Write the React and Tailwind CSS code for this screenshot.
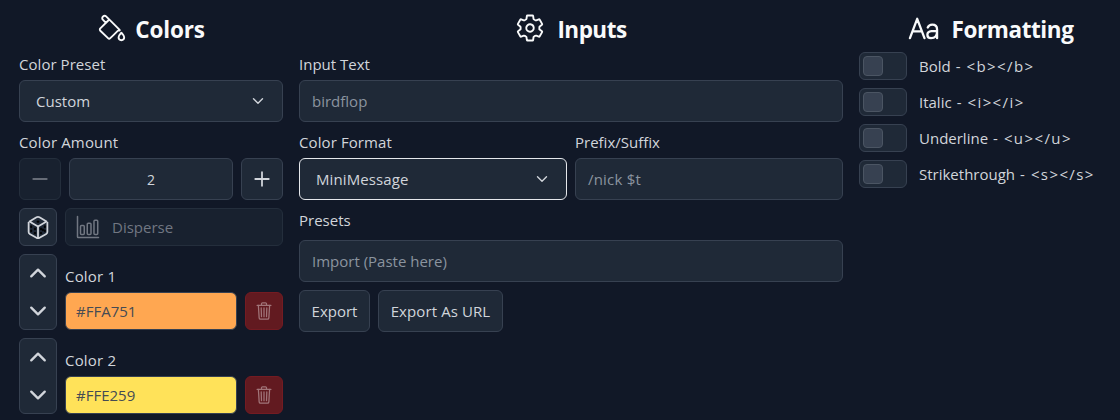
import {
  IoBarChartOutline,
  IoColorFillOutline,
  IoSettingsOutline,
  IoTrashOutline,
} from 'react-icons/io5';

const box = 'rounded-md border border-[#374151] bg-[#1f2937]';

function Stroke({ d, size = 24, width = 40, className = '' }) {
  return (
    <svg className={className} width={size} height={size} viewBox="0 0 512 512" fill="none" stroke="currentColor" strokeWidth={width} strokeLinecap="round" strokeLinejoin="round">
      <path d={d} />
    </svg>
  );
}

function Dice() {
  return (
    <svg width="24" height="24" viewBox="0 0 512 512">
      <g fill="#000" stroke="#000" strokeWidth="8">
        <ellipse cx="256" cy="142" rx="26" ry="19" />
        <ellipse cx="110" cy="250" rx="17" ry="26" />
        <ellipse cx="192" cy="298" rx="17" ry="26" />
        <ellipse cx="110" cy="338" rx="17" ry="26" />
        <ellipse cx="192" cy="386" rx="17" ry="26" />
        <ellipse cx="320" cy="298" rx="17" ry="26" />
        <ellipse cx="402" cy="250" rx="17" ry="26" />
        <ellipse cx="361" cy="318" rx="17" ry="26" />
        <ellipse cx="320" cy="386" rx="17" ry="26" />
        <ellipse cx="402" cy="338" rx="17" ry="26" />
      </g>
      <g fill="none" stroke="currentColor" strokeWidth="38" strokeLinejoin="round">
        <path d="M438 138 288 49a64 64 0 0 0-64 0L74 138l182 108Z" />
        <path d="M56 150v214a48 48 0 0 0 24 41l152 86a48 48 0 0 0 48 0l152-86a48 48 0 0 0 24-41V150M256 246v246" />
      </g>
    </svg>
  );
}

function Heading({ icon, children, className = '' }) {
  return (
    <h1 className={`mt-[11px] flex h-9 items-center justify-center text-[22.5px] font-bold text-[#f9fafb] ${className}`}>
      {icon}
      <span className="whitespace-nowrap pt-px">{children}</span>
    </h1>
  );
}

function Label({ children, className = '' }) {
  return <div className={`h-6 whitespace-nowrap leading-6 ${className}`}>{children}</div>;
}

function Select({ children, className = '' }) {
  return (
    <button className={`flex h-[42px] w-full items-center justify-between rounded-md border bg-[#1f2937] pl-4 pr-4 ${className}`}>
      <span>{children}</span>
      <Stroke d="m112 184 144 144 144-144" size={16} width={44} />
    </button>
  );
}

function Field({ children, className = '' }) {
  return <div className={`flex h-[42px] items-center px-3 text-[#8b949f] ${box} ${className}`}>{children}</div>;
}

function ColorRow({ name, value, className }) {
  return (
    <div className="mt-2 flex h-[76px] gap-2">
      <div className={`flex w-[38px] shrink-0 flex-col ${box}`}>
        <button className="flex flex-1 items-center justify-center pb-0.5"><Stroke d="m112 328 144-144 144 144" width={50} /></button>
        <button className="flex flex-1 items-center justify-center"><Stroke d="m112 184 144 144 144-144" width={50} /></button>
      </div>
      <div className="w-[172px] pt-[10px]">
        <Label className="mb-1 tracking-[0.2px]">{name}</Label>
        <div className={`flex h-[38px] items-center rounded-md border border-[#374151] px-[10px] text-[#454b54] ${className}`}>{value}</div>
      </div>
      <button className="flex h-[38px] w-[38px] items-center justify-center self-end rounded-md border border-[#741b22] bg-[#621a20] text-[#a17579]">
        <IoTrashOutline size={20} />
      </button>
    </div>
  );
}

function Toggle({ name, tag }) {
  return (
    <div className="flex h-7 items-center gap-3">
      <div className={`flex h-7 w-12 items-center px-[3px] ${box}`}>
        <div className="h-5 w-5 rounded-[4px] border border-[#4b5563] bg-[#374151]" />
      </div>
      <span className="flex whitespace-nowrap">
        <span>{name}</span>
        <span className="ml-[5px] mr-[6px]">-</span>
        <span className="tracking-[1.4px]">{tag}</span>
      </span>
    </div>
  );
}

export default function App() {
  return (
    <main className="flex h-[420px] w-[1120px] gap-4 overflow-hidden bg-[#111827] pl-[19px] font-['Open_Sans',sans-serif] text-[15px] text-[#d1d5db]">
      <section className="w-[264px] shrink-0">
        <Heading className="tracking-[-0.15px]" icon={<IoColorFillOutline size={30} className="mr-2 -translate-y-px" />}>Colors</Heading>
        <Label className="mb-1 mt-[5px] tracking-[0.05px]">Color Preset</Label>
        <Select className="border-[#374151]">Custom</Select>
        <Label className="mb-1 mt-2 tracking-[0.15px]">Color Amount</Label>
        <div className="flex h-[42px] gap-2">
          <button className="flex w-[42px] items-center justify-center rounded-md border border-[#242e3c] bg-[#18212f] text-[#666c77]">
            <Stroke d="M400 256H112" width={38} />
          </button>
          <div className={`flex flex-1 items-center justify-center text-[14px] ${box}`}>2</div>
          <button className={`flex w-[42px] items-center justify-center ${box}`}>
            <Stroke d="M256 112v288M400 256H112" width={38} />
          </button>
        </div>
        <div className="mt-2 flex h-[38px] gap-2">
          <button className={`flex w-[38px] items-center justify-center ${box}`}><Dice /></button>
          <button className="flex flex-1 items-center gap-3 rounded-md border border-[#242e3c] bg-[#18212f] px-[10px] text-[#717782]">
            <IoBarChartOutline size={24} />
            <span>Disperse</span>
          </button>
        </div>
        <ColorRow name="Color 1" value="#FFA751" className="bg-[#ffa751]" />
        <ColorRow name="Color 2" value="#FFE259" className="bg-[#ffe259]" />
      </section>

      <section className="w-[544px] shrink-0">
        <Heading className="tracking-[-0.5px]" icon={<IoSettingsOutline size={30} className="mr-3 -translate-y-px" />}>Inputs</Heading>
        <Label className="mb-1 mt-[5px]">Input Text</Label>
        <Field>birdflop</Field>
        <div className="mt-2 grid grid-cols-2 gap-2">
          <div>
            <Label className="mb-1 tracking-[0.1px]">Color Format</Label>
            <Select className="border-[#e5e7eb] tracking-[0.1px]">MiniMessage</Select>
          </div>
          <div>
            <Label className="mb-1">Prefix/Suffix</Label>
            <Field className="tracking-[0.2px]">/nick $t</Field>
          </div>
        </div>
        <Label className="mb-2 mt-2">Presets</Label>
        <Field>Import (Paste here)</Field>
        <div className="mt-2 flex gap-2">
          <button className={`h-[42px] w-[71px] whitespace-nowrap ${box}`}>Export</button>
          <button className={`h-[42px] w-[125px] whitespace-nowrap tracking-[0.1px] ${box}`}>Export As URL</button>
        </div>
      </section>

      <section className="w-[264px] shrink-0">
        <Heading
          className="tracking-[-0.4px]"
          icon={
            <Stroke
              d="M32 415.5l120-320 120 320M230 303.5H74M326 239.5c12.19-28.69 41-48 74-48 46 0 80 28 80 80v144M320 358.5c0 36 26.86 58 60 58 54 0 100-27 100-106v-15c-20 0-58 1-92 5-32.77 3.86-68 19-68 58Z"
              size={31}
              width={38}
              className="mr-3 -translate-y-px"
            />
          }
        >
          Formatting
        </Heading>
        <div className="mt-[5px] flex flex-col gap-2">
          <Toggle name="Bold" tag="<b></b>" />
          <Toggle name="Italic" tag="<i></i>" />
          <Toggle name="Underline" tag="<u></u>" />
          <Toggle name="Strikethrough" tag="<s></s>" />
        </div>
      </section>
    </main>
  );
}
